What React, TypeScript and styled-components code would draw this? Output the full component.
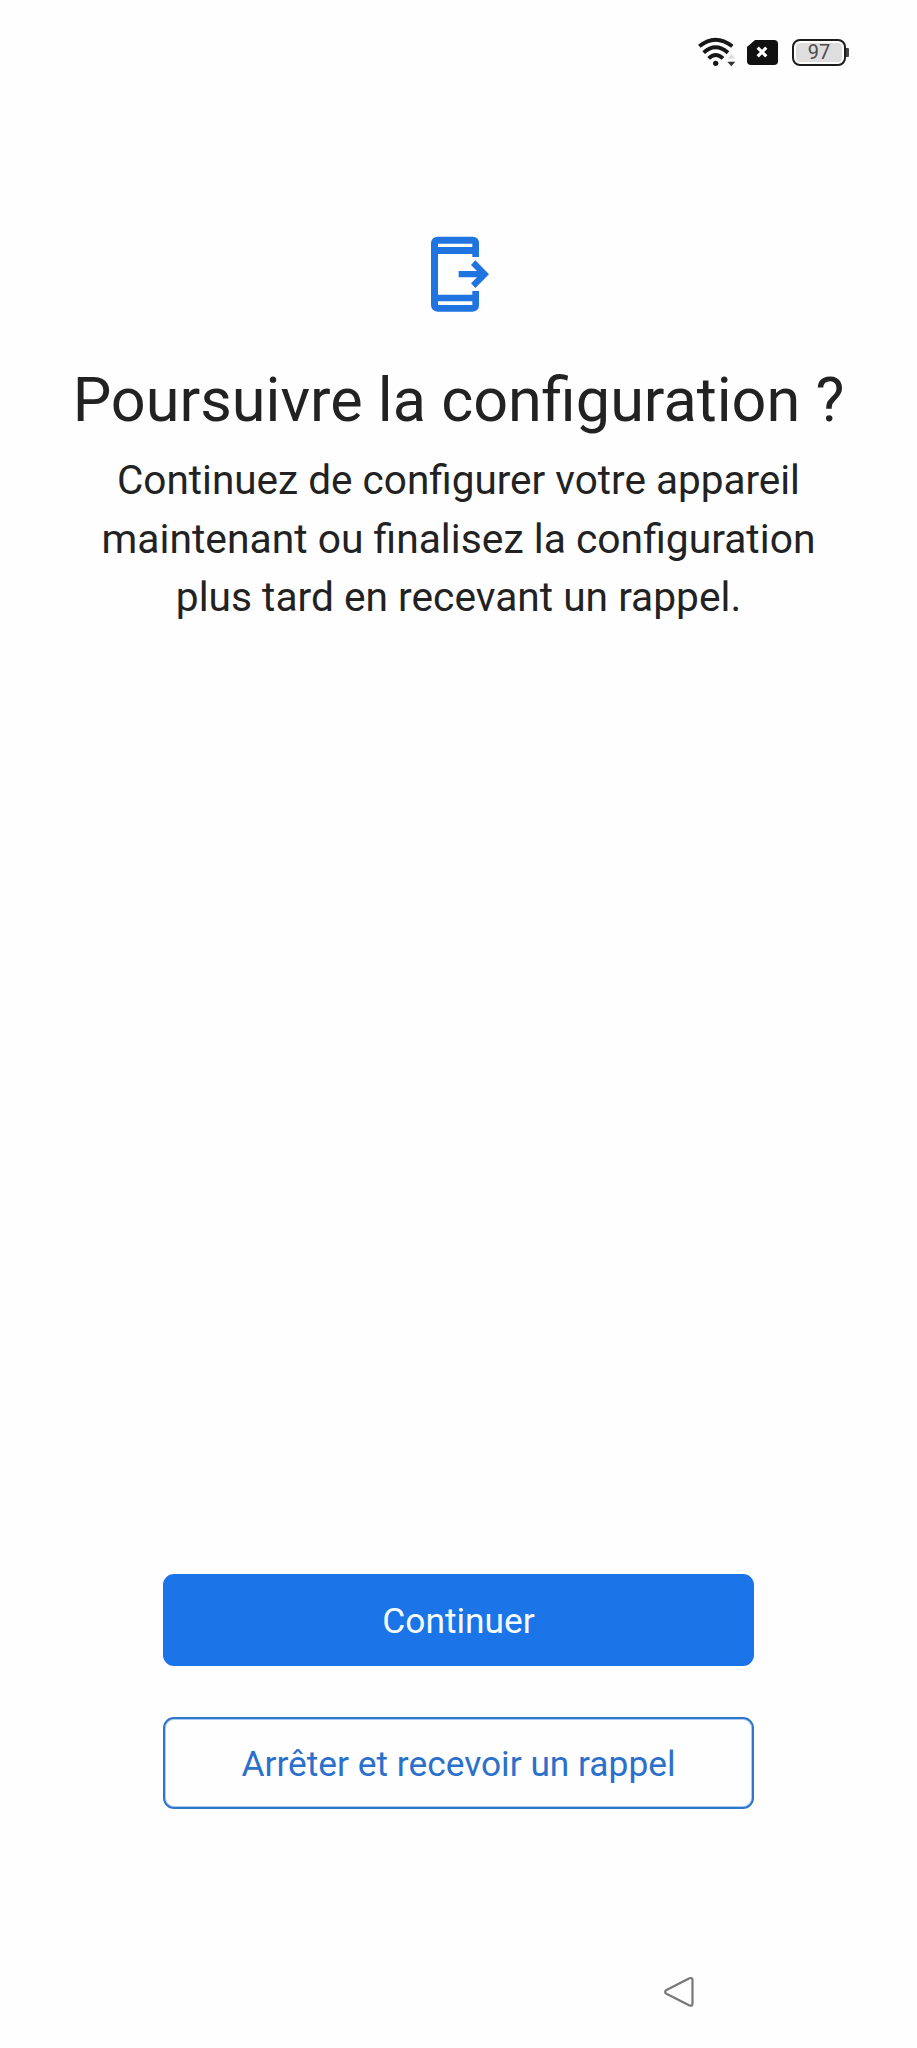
import React from "react";
import styled, { createGlobalStyle } from "styled-components";

const GlobalStyle = createGlobalStyle`
  * { box-sizing: border-box; }
  body { margin: 0; background: #fefefe; font-family: Roboto, "Liberation Sans", sans-serif; }
`;

const Screen = styled.div`
  display: flex;
  flex-direction: column;
  width: 917px;
  height: 2048px;
  background: #fefefe;
  color: #222223;
`;

const StatusBar = styled.header`
  display: flex;
  justify-content: flex-end;
  align-items: flex-start;
  height: 236px;
  padding: 35px 68px 0 0;
`;

const WifiIcon = styled.svg`
  width: 40px;
  height: 34px;
`;

const SimIcon = styled.svg`
  width: 31px;
  height: 26px;
  margin: 4px 0 0 10px;
`;

const Battery = styled.div`
  display: flex;
  align-items: center;
  margin: 4px 0 0 14px;
`;

const BatteryCase = styled.div`
  width: 54px;
  height: 27px;
  padding: 2px;
  border: 2px solid #1c1c1c;
  border-radius: 8px;
`;

const BatteryLevel = styled.div`
  display: flex;
  align-items: center;
  justify-content: center;
  height: 19px;
  border-radius: 4px;
  background: #dedede;
  color: #4c4c4c;
  font-size: 20px;
  line-height: 19px;
`;

const BatteryTip = styled.div`
  width: 3px;
  height: 9px;
  background: #444;
  border-radius: 0 1px 1px 0;
`;

const Content = styled.main`
  display: flex;
  flex: 1;
  flex-direction: column;
  align-items: center;
  text-align: center;
`;

const PhoneIcon = styled.svg`
  width: 60px;
  height: 77px;
  margin-left: 3px;
`;

const Title = styled.h1`
  margin: 51px 0 0;
  font-size: 61.2px;
  font-weight: 400;
  line-height: 72px;
  white-space: nowrap;
`;

const Description = styled.p`
  display: flex;
  flex-direction: column;
  margin: 15px 0 0;
  white-space: nowrap;
`;

const Line = styled.span<{ $size: number }>`
  font-size: ${(p) => p.$size}px;
  line-height: 58.5px;
`;

const Actions = styled.div`
  display: flex;
  flex-direction: column;
  align-items: center;
  gap: 51px;
  height: 375px;
`;

const Button = styled.button<{ $primary?: boolean }>`
  width: 591px;
  height: 92px;
  padding: 2px 0 0;
  border: 2px solid ${(p) => (p.$primary ? "#1b74e8" : "#2f76c9")};
  border-radius: 11px;
  background: ${(p) => (p.$primary ? "#1b74e8" : "transparent")};
  box-shadow: ${(p) => (p.$primary ? "none" : "inset 0 0 0 1px #a9cdf3")};
  color: ${(p) => (p.$primary ? "#f5fcff" : "#2b70cb")};
  font-family: inherit;
  font-size: 35.3px;
  font-weight: 400;
`;

const NavigationBar = styled.nav`
  display: flex;
  justify-content: flex-end;
  height: 99px;
  padding: 26px 222px 0 0;
`;

const BackIcon = styled.svg`
  width: 32px;
  height: 32px;
`;

export default function App() {
  return (
    <>
      <GlobalStyle />
      <Screen>
        <StatusBar>
          <WifiIcon viewBox="50 30 120 102" fill="none" stroke="#171717" strokeWidth="11.5">
            <path d="M57 64Q105 24 156 64" />
            <path d="M70 83Q105 51 143 83" />
            <path d="M85 100Q106 80 128 100" />
            <circle cx="106" cy="115" r="8" fill="#171717" stroke="none" />
            <path d="M141 101L153 87L165 101Z" fill="#dedede" stroke="none" />
            <path d="M141 110H165L153 124Z" fill="#333" stroke="none" />
          </WifiIcon>
          <SimIcon viewBox="0 0 31 26">
            <path d="M8 1H27Q31 1 31 5V22Q31 26 27 26H4Q0 26 0 22V8Z" fill="#111" />
            <path d="M10.7 8.7L19.3 17.3M19.3 8.7L10.7 17.3" stroke="#fff" strokeWidth="3.2" />
          </SimIcon>
          <Battery>
            <BatteryCase>
              <BatteryLevel>97</BatteryLevel>
            </BatteryCase>
            <BatteryTip />
          </Battery>
        </StatusBar>
        <Content>
          <PhoneIcon viewBox="60 48 180 231" fill="#1f74df">
            <path
              fillRule="evenodd"
              d="M83 50H188Q207 51 207 70V111H187V102H84V224H187V213H207V256Q207 274 188 275H83Q64 274 63 256V70Q64 51 83 50ZM84 71V81H187V71ZM84 244V255H187V244Z"
            />
            <path d="M146 153H201L183 135L196 121L237 163L196 204L183 190L201 172H146Z" />
          </PhoneIcon>
          <Title>Poursuivre la configuration ?</Title>
          <Description>
            <Line $size={40.5}>Continuez de configurer votre appareil</Line>
            <Line $size={40.8}>maintenant ou finalisez la configuration</Line>
            <Line $size={40.7}>plus tard en recevant un rappel.</Line>
          </Description>
        </Content>
        <Actions>
          <Button $primary>Continuer</Button>
          <Button>Arrêter et recevoir un rappel</Button>
        </Actions>
        <NavigationBar>
          <BackIcon viewBox="0 0 32 32" fill="none" stroke="#777" strokeWidth="2.2" strokeLinejoin="round">
            <path d="M3 15.3Q1.2 17 3 18.5L26.5 30.4Q29.5 31.5 29.5 28.5V5Q29.5 2.3 26.5 3.2Z" />
          </BackIcon>
        </NavigationBar>
      </Screen>
    </>
  );
}
